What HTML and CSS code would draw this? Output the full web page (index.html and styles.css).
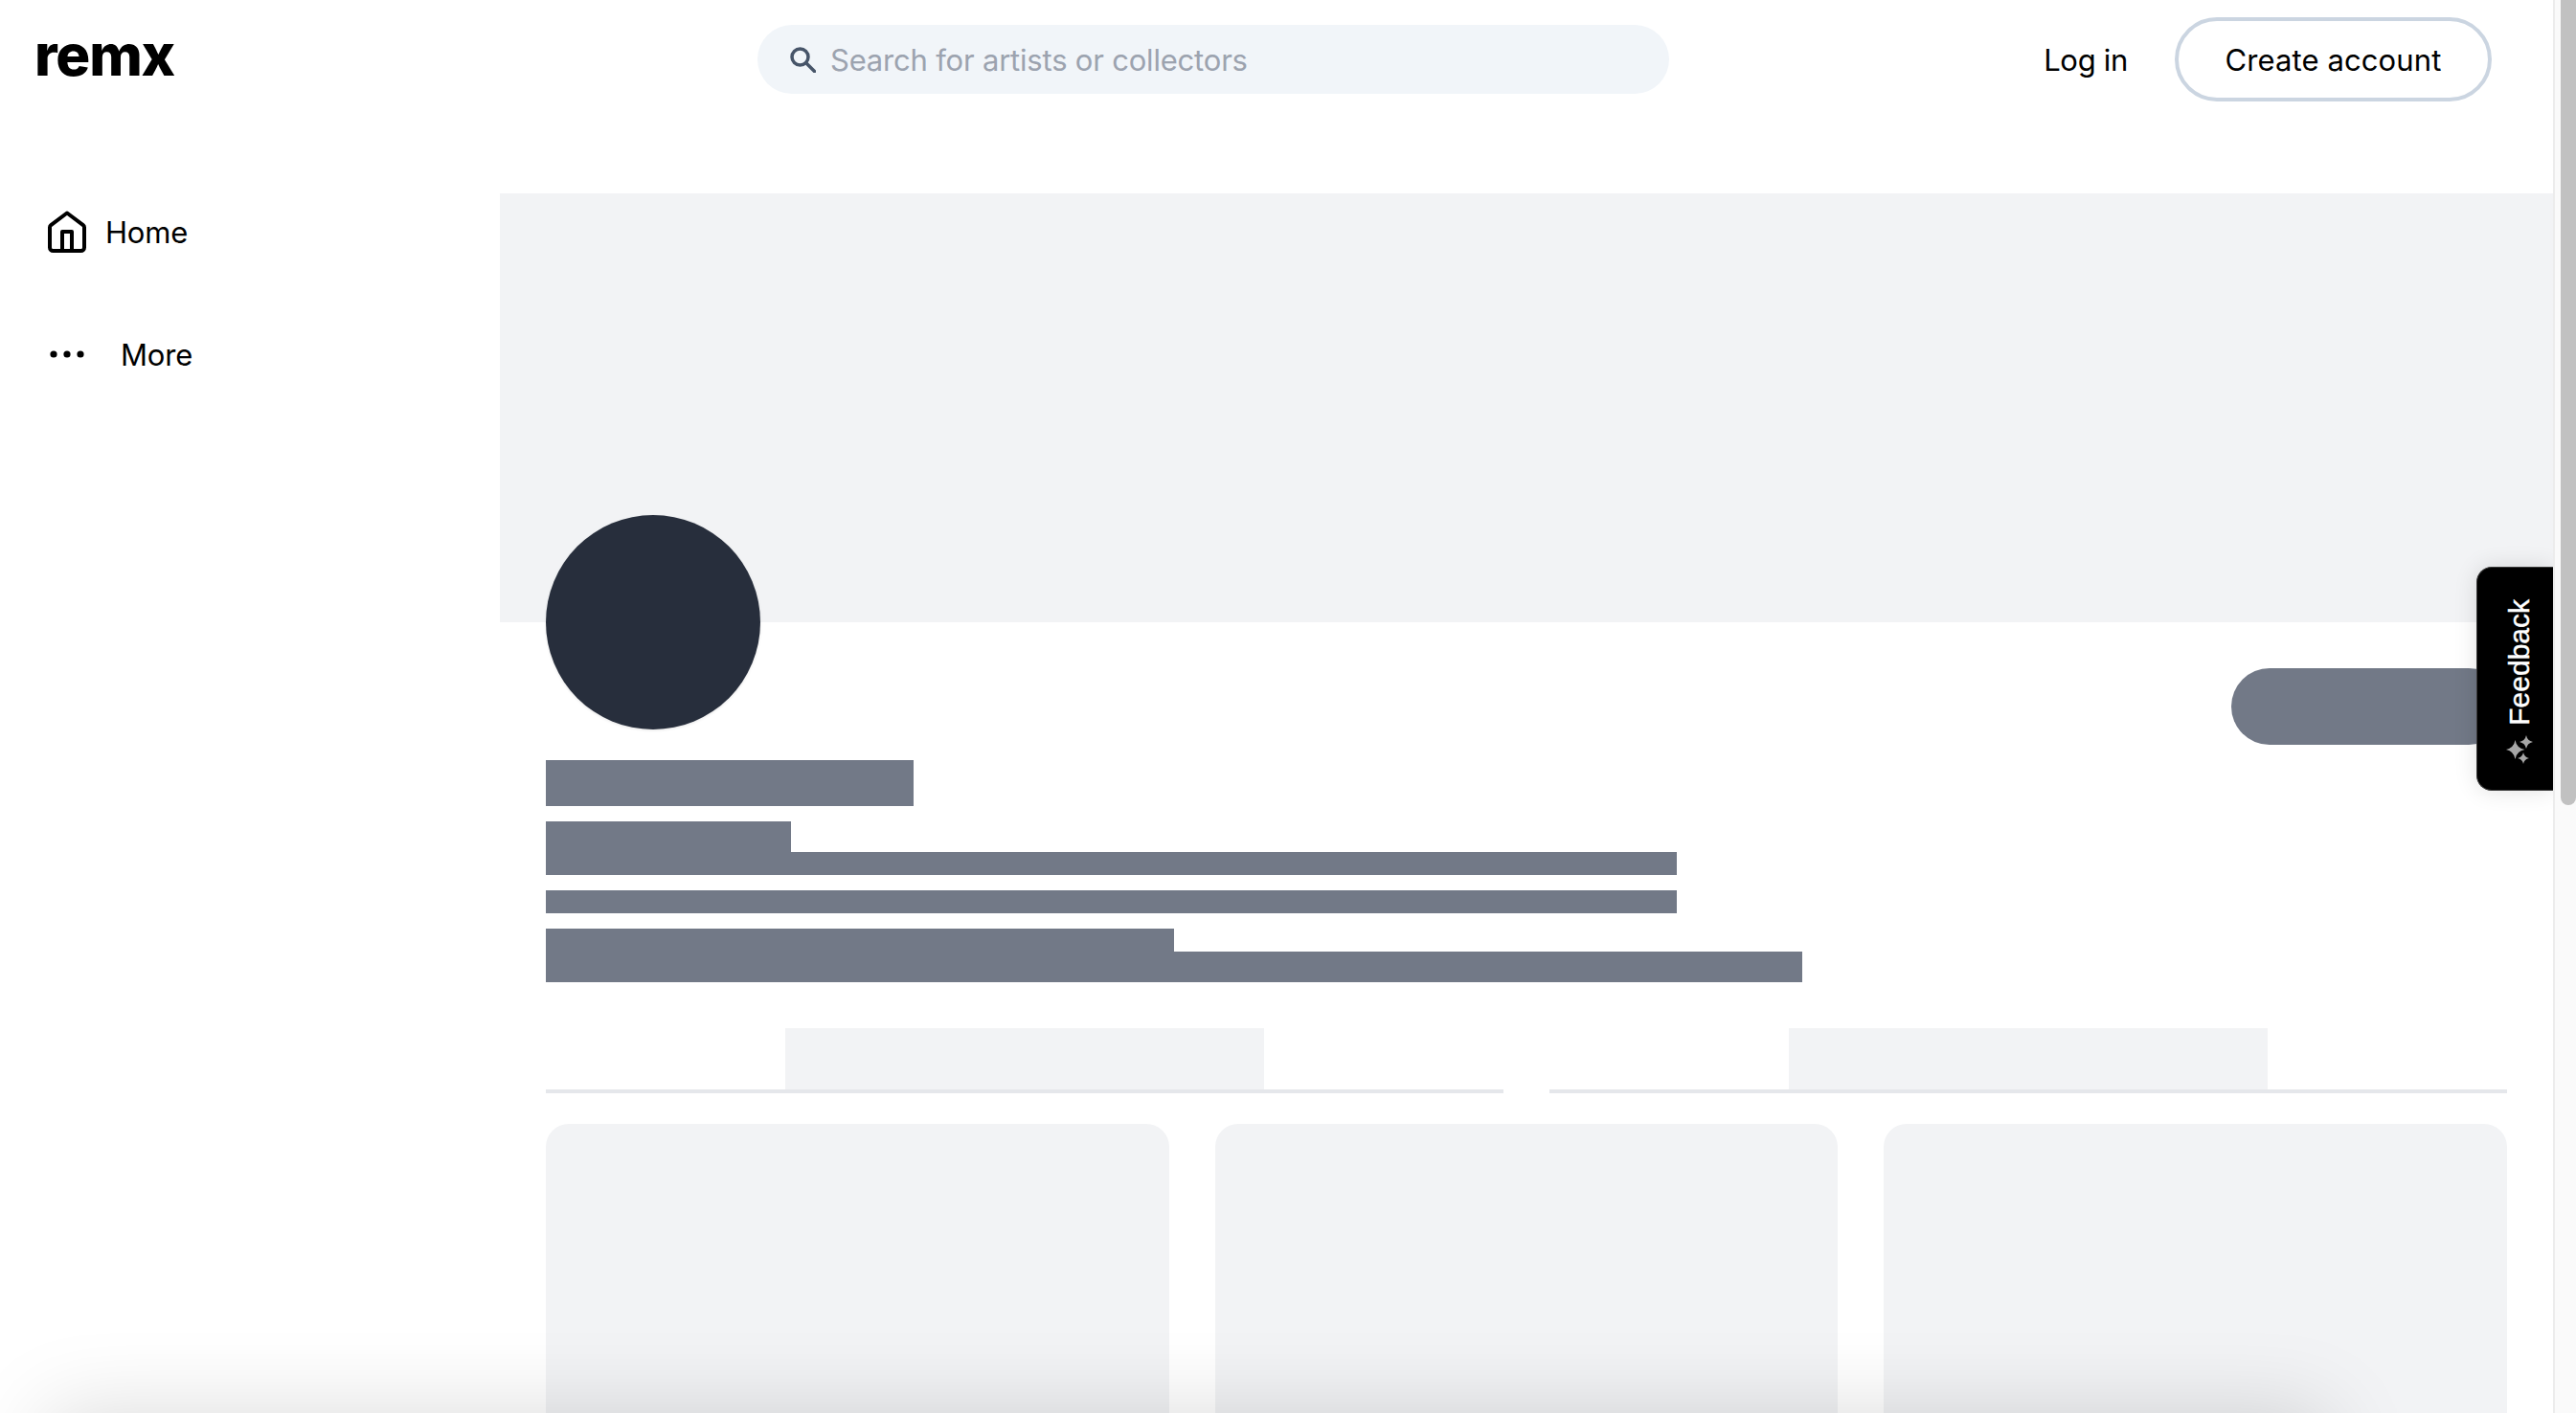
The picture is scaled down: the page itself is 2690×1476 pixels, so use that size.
FILE: index.html
```html
<!DOCTYPE html>
<html lang="en">
<head>
<meta charset="utf-8">
<title>remx</title>
<link rel="stylesheet" href="styles.css">
</head>
<body>
<div class="app">
  <div class="page">
    <header class="topbar">
      <a class="logo">remx</a>
      <div class="search">
        <svg class="search-icon" viewBox="0 0 28 28" fill="none" stroke="#475569" stroke-width="3.500"><circle cx="11.500" cy="11.500" r="8.500"/><path d="M18 18l8.500 8.500" stroke-linecap="round"/></svg>
        <span class="search-text">Search for artists or collectors</span>
      </div>
      <div class="auth">
        <a class="login">Log in</a>
        <a class="create">Create account</a>
      </div>
    </header>
    <div class="layout">
      <nav class="side">
        <a class="nav-item home">
          <svg class="home-icon" viewBox="0 0 40 44" fill="none" stroke="#000" stroke-width="4" stroke-linejoin="round"><path d="M2 17.500a3 3 0 0 1 1.200-2.400L20 2.500l16.800 12.600a3 3 0 0 1 1.200 2.400V38.500a3.500 3.500 0 0 1-3.500 3.500H5.500A3.500 3.500 0 0 1 2 38.500z"/><path d="M15 42V22h10v20"/></svg>
          <span>Home</span>
        </a>
        <a class="nav-item more">
          <svg class="dots-icon" viewBox="0 0 36 8" fill="#000"><circle cx="4" cy="4" r="3.600"/><circle cx="18" cy="4" r="3.600"/><circle cx="32" cy="4" r="3.600"/></svg>
          <span>More</span>
        </a>
      </nav>
      <main class="main">
        <div class="banner"></div>
        <div class="profile">
          <div class="avatar"></div>
          <div class="action-row"><div class="action"></div></div>
          <div class="bar name"></div>
          <div class="bio">
            <div class="bio-line l1"><div class="bar b1a"></div><div class="bar b1b"></div></div>
            <div class="bar b2"></div>
            <div class="bio-line l3"><div class="bar b3a"></div><div class="bar b3b"></div></div>
          </div>
          <div class="tabs">
            <div class="tab"><div class="tab-label"></div></div>
            <div class="tab"><div class="tab-label"></div></div>
          </div>
          <div class="cards">
            <div class="card"></div>
            <div class="card"></div>
            <div class="card"></div>
          </div>
        </div>
      </main>
    </div>
    <button class="feedback">
      <span class="feedback-label">Feedback</span>
      <svg class="spark" viewBox="0 0 28 30" fill="#a6a6a6"><path d="M9.500 5Q11 13.500 19.500 15 11 16.500 9.500 25 8 16.500-.5 15 8 13.500 9.500 5z"/><path d="M21 0Q22.200 5.800 28 7 22.200 8.200 21 14 19.800 8.200 14 7 19.800 5.800 21 0z"/><path d="M18 18Q19 23 24 24 19 25 18 30 17 25 12 24 17 23 18 18z"/></svg>
    </button>
    <div class="dock-shadow"></div>
  </div>
  <div class="scrollbar"><div class="thumb"></div></div>
</div>
</body>
</html>
```
FILE: styles.css
```css
* { box-sizing: border-box; }
html, body { margin: 0; height: 100%; overflow: hidden; background: #fff; }
body { font-family: "Inter", "Liberation Sans", sans-serif; color: #000; }
.app { display: flex; height: 100vh; }
.page { flex: 1; min-width: 0; position: relative; overflow: hidden; }
.scrollbar { width: 24px; flex: none; background: #fafafa; border-left: 2px solid #ececec; padding-left: 6px; }
.thumb { height: 841px; background: #c1c1c1; border-radius: 0 0 8px 8px; }

.topbar { height: 202px; display: flex; align-items: flex-start; position: relative; }
.logo { font-size: 60px; font-weight: 800; line-height: 72px; margin: 21px 0 0 36px; letter-spacing: -1.2px; width: 755px; }
.search { width: 952px; height: 72px; margin-top: 26px; background: #f1f5f9; border-radius: 36px; display: flex; align-items: center; padding-left: 33px; }
.search-icon { width: 28px; height: 28px; flex: none; }
.search-text { margin-left: 15px; font-size: 31px; letter-spacing: -0.2px; color: #9ca3af; }
.auth { margin-left: auto; margin-right: 64px; margin-top: 18px; display: flex; align-items: center; gap: 49px; }
.login { font-size: 31px; letter-spacing: -0.3px; }
.create { height: 88px; width: 331px; border: 4px solid #cbd5e1; border-radius: 44px; display: flex; align-items: center; justify-content: center; font-size: 31px; letter-spacing: 0.1px; }

.layout { display: flex; }
.side { width: 522px; flex: none; padding-left: 50px; }
.nav-item { display: flex; align-items: center; font-size: 31px; letter-spacing: -0.2px; }
.home { margin-top: 18px; height: 44px; gap: 20px; }
.home-icon { width: 40px; height: 44px; flex: none; }
.more { margin-top: 84px; height: 44px; gap: 38px; padding-left: 2px; }
.dots-icon { width: 36px; height: 8px; flex: none; }

.main { flex: 1; min-width: 0; }
.banner { height: 448px; background: #f2f3f5; }
.profile { padding: 0 48px; position: relative; display: flow-root; }
.avatar { width: 224px; height: 224px; border-radius: 50%; background: #272e3c; margin-top: -112px; box-shadow: 0 1px 3px rgba(0,0,0,.1); position: relative; }
.action-row { position: absolute; top: 48px; right: 48px; }
.action { width: 288px; height: 80px; border-radius: 40px; background: #727987; }
.bar { background: #727987; }
.name { width: 384px; height: 48px; margin-top: 32px; }
.bio { margin-top: 16px; display: flex; flex-direction: column; gap: 16px; }
.l1, .l3 { height: 56px; }
.b1a { width: 256px; height: 32px; }
.b1b { width: 1181px; height: 24px; }
.b2 { width: 1181px; height: 24px; }
.b3a { width: 656px; height: 24px; }
.b3b { width: 1312px; height: 32px; }
.tabs { margin-top: 48px; display: grid; grid-template-columns: 1fr 1fr; gap: 48px; }
.tab { border-bottom: 4px solid #e5e7eb; display: flex; justify-content: center; }
.tab-label { width: 500px; height: 64px; background: #f2f3f5; }
.cards { margin-top: 32px; display: grid; grid-template-columns: repeat(3, 1fr); gap: 48px; }
.card { height: 700px; border-radius: 24px; background: #f2f3f5; }

.feedback { position: absolute; top: 592px; right: 0; width: 80px; height: 234px; background: #000; border: 1px solid #3a3a3a; border-right: 0; border-radius: 16px 0 0 16px; box-shadow: 0 0 24px rgba(0,0,0,.12); display: flex; flex-direction: column; align-items: center; justify-content: flex-start; gap: 10px; padding: 33px 0 0 8px; color: #fff; font-family: "Liberation Sans", sans-serif; }
.feedback-label { writing-mode: vertical-rl; transform: rotate(180deg); font-size: 30px; line-height: 34px; -webkit-text-stroke: 0.4px #fff; }
.spark { width: 28px; height: 30px; flex: none; }
.dock-shadow { position: absolute; left: 50px; right: 236px; bottom: -120px; height: 120px; box-shadow: 0 0 90px rgba(0,0,0,.15); pointer-events: none; }
```
